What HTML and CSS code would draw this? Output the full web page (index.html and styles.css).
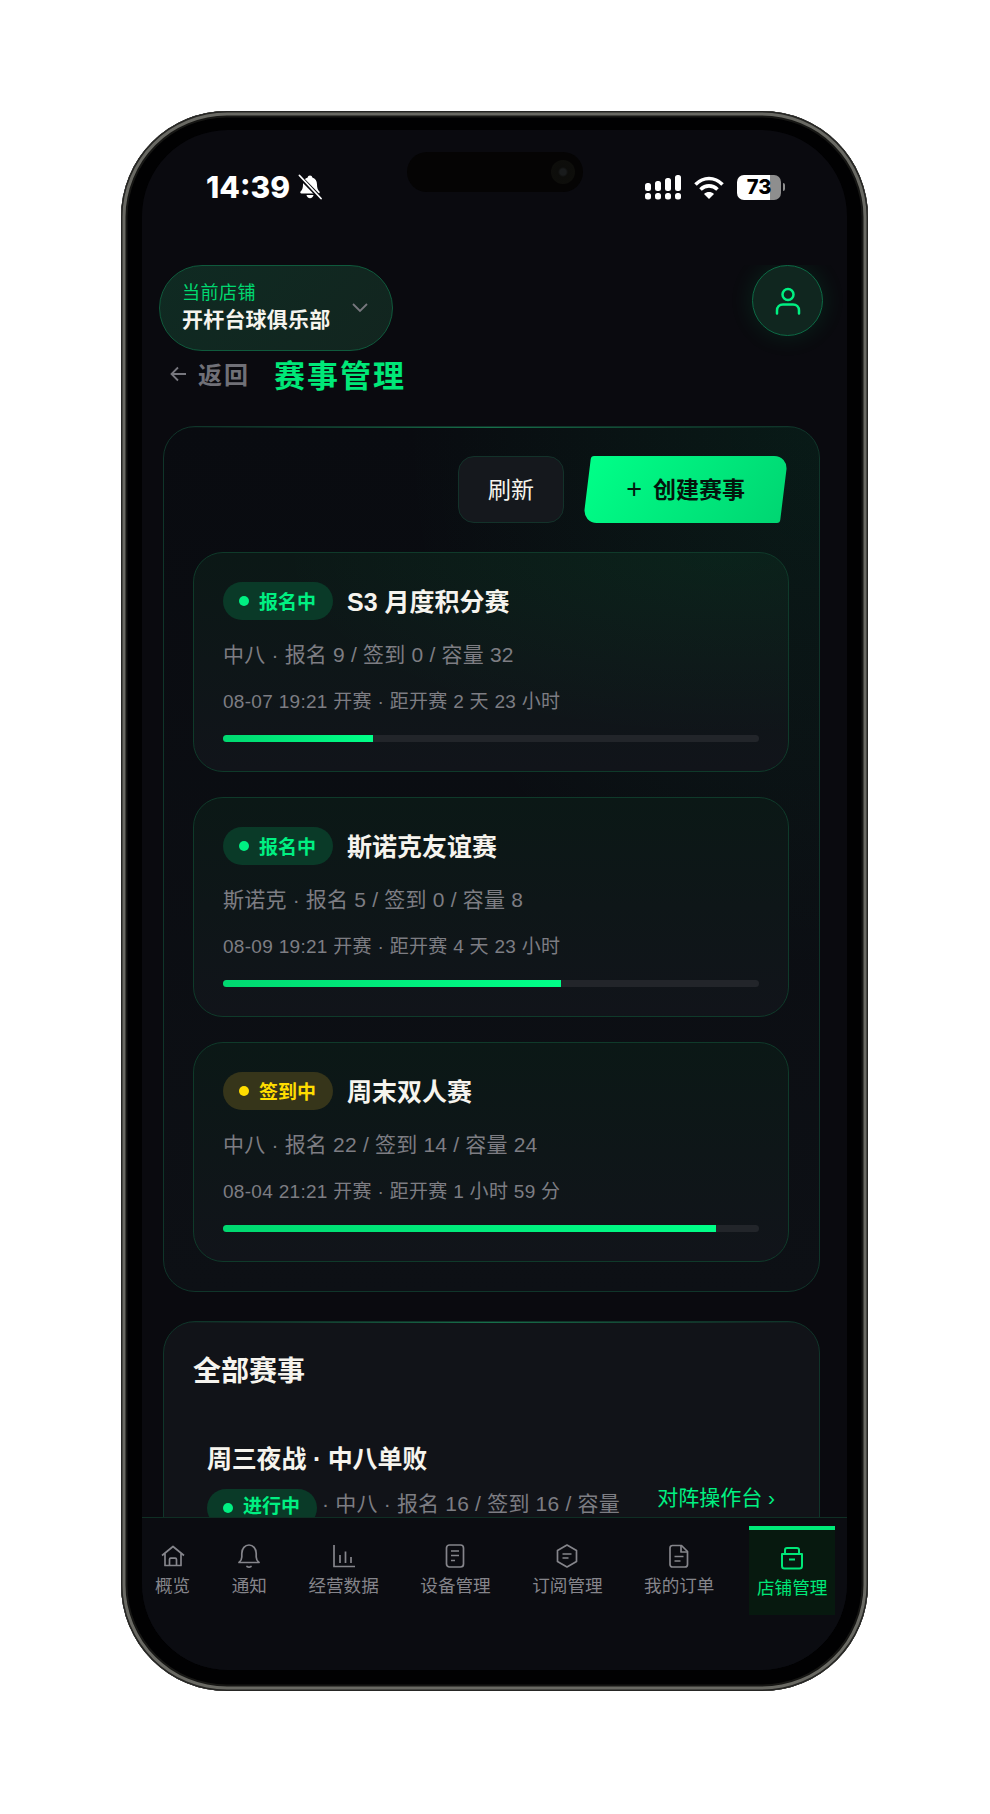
FILE: index.html
```html
<!DOCTYPE html>
<html lang="zh-CN">

<head>
    <meta charset="UTF-8">
    <meta name="viewport" content="width=device-width, initial-scale=1.0">
    <title>赛事管理</title>
    <link rel="stylesheet" href="styles.css">
</head>

<body>
    <div class="phone">
        <div class="screen">
            <div class="status-bar">
                <div class="status-left">
                    <span class="time">14:39</span>
                    <svg class="bell-off" width="24" height="26" viewBox="0 0 24 26">
                        <path d="M12 1.5c-1.3 0-2.2.9-2.3 2C6.600 4.500 5 7 5 10.500c0 3.500-.8 5.500-2.400 7-.7.7-.3 1.900.8 1.900h17.200c1.100 0 1.500-1.200.8-1.900-1.600-1.500-2.400-3.500-2.400-7 0-3.500-1.600-6-4.700-7-.1-1.100-1-2-2.300-2z" fill="#fff"/>
                        <path d="M8.500 21h7c-.3 2-1.700 3.200-3.500 3.200S8.800 23 8.500 21z" fill="#fff"/>
                        <path d="M1.500 2.500 22.500 24" stroke="#0a0a0f" stroke-width="4"/>
                        <path d="M1.500 1.500 23 24.500" stroke="#fff" stroke-width="1.800" stroke-linecap="round"/>
                    </svg>
                </div>
                <div class="island"><span class="camera"></span></div>
                <div class="status-right">
                    <svg width="36" height="25" viewBox="0 0 36 25" fill="#fff">
                        <rect x="0" y="8" width="6" height="8" rx="2.500"/>
                        <rect x="0" y="18" width="6" height="6.500" rx="2.500"/>
                        <rect x="10" y="6" width="6" height="10" rx="2.500"/>
                        <rect x="10" y="18" width="6" height="6.500" rx="2.500"/>
                        <rect x="20" y="3" width="6" height="13" rx="2.500"/>
                        <rect x="20" y="18" width="6" height="6.500" rx="2.500"/>
                        <rect x="30" y="0" width="6" height="16" rx="2.500"/>
                        <rect x="30" y="18" width="6" height="6.500" rx="2.500"/>
                    </svg>
                    <svg width="30" height="25" viewBox="0 0 30 25" fill="none" stroke="#fff" stroke-width="3.600">
                        <path d="M1.500 9.500C9.500 1.500 20.500 1.500 28.500 9.500"/>
                        <path d="M6.500 14.500c5-4.800 12-4.800 17 0"/>
                        <path d="M15 24l-5-5c3-2.600 7-2.600 10 0z" fill="#fff" stroke="none"/>
                    </svg>
                    <div class="battery-wrap">
                        <div class="battery">73</div>
                        <span class="battery-nub"></span>
                    </div>
                </div>
            </div>

            <main class="content">
                <div class="top-row">
                    <div class="store-pill">
                        <div class="store-text">
                            <div class="store-label">当前店铺</div>
                            <div class="store-name">开杆台球俱乐部</div>
                        </div>
                        <svg width="16" height="10" viewBox="0 0 16 10" fill="none" stroke="#77777e" stroke-width="1.800">
                            <path d="M1 1l7 7 7-7"/>
                        </svg>
                    </div>
                    <div class="avatar">
                        <svg width="26" height="28" viewBox="0 0 26 28" fill="none" stroke="#00f082" stroke-width="2.500">
                            <circle cx="13" cy="7.500" r="5.500"/>
                            <path d="M2 26.500v-3c0-3.500 2.500-6 6-6h10c3.500 0 6 2.500 6 6v3" stroke-linecap="round"/>
                        </svg>
                    </div>
                </div>

                <div class="title-row">
                    <div class="back">
                        <svg width="16" height="16" viewBox="0 0 16 16" fill="none" stroke="#77777e" stroke-width="1.800">
                            <path d="M8 1.500 1.500 8 8 14.500M2 8h14"/>
                        </svg>
                        <span>返回</span>
                    </div>
                    <h1 class="page-title">赛事管理</h1>
                </div>

                <section class="panel">
                    <div class="toolbar">
                        <button class="btn-refresh">刷新</button>
                        <button class="btn-create"><span class="btn-create-text"><b class="plus">+</b>创建赛事</span></button>
                    </div>

                    <div class="match-list">
                        <div class="match-card">
                            <div class="match-head">
                                <span class="chip"><i class="dot"></i>报名中</span>
                                <span class="match-name">S3 月度积分赛</span>
                            </div>
                            <div class="match-meta">中八 · 报名 9 / 签到 0 / 容量 32</div>
                            <div class="match-time">08-07 19:21 开赛 · 距开赛 2 天 23 小时</div>
                            <div class="progress"><div class="progress-fill" style="width: 28%"></div></div>
                        </div>

                        <div class="match-card">
                            <div class="match-head">
                                <span class="chip"><i class="dot"></i>报名中</span>
                                <span class="match-name">斯诺克友谊赛</span>
                            </div>
                            <div class="match-meta">斯诺克 · 报名 5 / 签到 0 / 容量 8</div>
                            <div class="match-time">08-09 19:21 开赛 · 距开赛 4 天 23 小时</div>
                            <div class="progress"><div class="progress-fill" style="width: 63%"></div></div>
                        </div>

                        <div class="match-card">
                            <div class="match-head">
                                <span class="chip chip-yellow"><i class="dot"></i>签到中</span>
                                <span class="match-name">周末双人赛</span>
                            </div>
                            <div class="match-meta">中八 · 报名 22 / 签到 14 / 容量 24</div>
                            <div class="match-time">08-04 21:21 开赛 · 距开赛 1 小时 59 分</div>
                            <div class="progress"><div class="progress-fill" style="width: 92%"></div></div>
                        </div>
                    </div>
                </section>

                <section class="panel panel-all">
                    <h2 class="panel-title">全部赛事</h2>
                    <div class="all-row">
                        <div class="all-info">
                            <div class="all-name">周三夜战 · 中八单败</div>
                            <div class="all-meta">
                                <span class="chip"><i class="dot"></i>进行中</span>
                                <span>· 中八 · 报名 16 / 签到 16 / 容量</span>
                            </div>
                        </div>
                        <a class="all-link">对阵操作台 ›</a>
                    </div>
                </section>
            </main>

            <nav class="tabbar">
                <div class="tab">
                    <svg width="26" height="26" viewBox="0 0 26 26" fill="none" stroke="currentColor" stroke-width="1.700" stroke-linejoin="round">
                        <path d="M2 12.500 13 3.500l11 9M5 10.500v12h16v-12"/>
                        <path d="M9.500 22.500v-6c0-.8.500-1.300 1.300-1.300h4.400c.8 0 1.300.500 1.300 1.300v6"/>
                    </svg>
                    <span>概览</span>
                </div>
                <div class="tab">
                    <svg width="26" height="26" viewBox="0 0 26 26" fill="none" stroke="currentColor" stroke-width="1.700" stroke-linecap="round">
                        <path d="M3 19.500c1.800-1.500 2.800-3 2.800-5.500v-3.500C5.800 5.500 9 2 13 2s7.200 3.500 7.200 8.500V14c0 2.500 1 4 2.800 5.500z" stroke-linejoin="round"/>
                        <path d="M11 23.500c1.200.8 2.800.8 4 0"/>
                    </svg>
                    <span>通知</span>
                </div>
                <div class="tab">
                    <svg width="26" height="26" viewBox="0 0 26 26" fill="none" stroke="currentColor" stroke-width="1.700">
                        <path d="M3 2v21.500h21M9 12v8M14.500 8.500V20M20 14v6"/>
                    </svg>
                    <span>经营数据</span>
                </div>
                <div class="tab">
                    <svg width="26" height="26" viewBox="0 0 26 26" fill="none" stroke="currentColor" stroke-width="1.700">
                        <rect x="4.500" y="2" width="17" height="22" rx="3"/>
                        <path d="M9 8h8M9 12.500h8M9 17.500h4"/>
                    </svg>
                    <span>设备管理</span>
                </div>
                <div class="tab">
                    <svg width="26" height="26" viewBox="0 0 26 26" fill="none" stroke="currentColor" stroke-width="1.700" stroke-linejoin="round">
                        <path d="M13 2 22.500 7.500v11L13 24 3.500 18.500v-11z"/>
                        <path d="M8.500 11h9M8.500 15h6"/>
                    </svg>
                    <span>订阅管理</span>
                </div>
                <div class="tab">
                    <svg width="26" height="26" viewBox="0 0 26 26" fill="none" stroke="currentColor" stroke-width="1.700" stroke-linejoin="round">
                        <path d="M6.500 2.500h9l6 6v13c0 1.500-1 2.500-2.500 2.500H6.500C5 24 4 23 4 21.500V5C4 3.500 5 2.500 6.500 2.500z"/>
                        <path d="M15 2.500V9h6.500M8.500 13.500h9M8.500 18h6"/>
                    </svg>
                    <span>我的订单</span>
                </div>
                <div class="tab tab-active">
                    <svg width="26" height="26" viewBox="0 0 26 26" fill="none" stroke="currentColor" stroke-width="2" stroke-linejoin="round">
                        <path d="M6 9V5c0-1.200.8-2 2-2h10c1.200 0 2 .8 2 2v4"/>
                        <path d="M3 9h20v12c0 1.500-1 2.500-2.500 2.500h-15C4 23.500 3 22.500 3 21z"/>
                        <path d="M10 14.500h6"/>
                    </svg>
                    <span>店铺管理</span>
                </div>
            </nav>
        </div>
    </div>
</body>

</html>
```

FILE: styles.css
```css
* {
    margin: 0;
    padding: 0;
    box-sizing: border-box;
}

body {
    background: #fff;
    height: 1814px;
    padding-top: 111px;
    overflow: hidden;
    font-family: "Liberation Sans", "Noto Sans CJK SC", sans-serif;
}

.phone {
    width: 747px;
    height: 1580px;
    margin-left: 121px;
    padding: 19px 21px 21px;
    background: #010102;
    border-radius: 106px;
    box-shadow: inset 0 0 0 1.5px #262624, inset 0 0 0 4.5px #696963, inset 0 0 0 6.5px #161614;
}

.screen {
    height: 100%;
    border-radius: 86px;
    background: #0a0a0f;
    overflow: hidden;
    display: flex;
    flex-direction: column;
    position: relative;
}

/* status bar */
.status-bar {
    height: 135px;
    flex-shrink: 0;
    padding: 42px 62px 0 64px;
    display: flex;
    justify-content: space-between;
    align-items: flex-start;
}

.status-left {
    display: flex;
    align-items: center;
    gap: 8px;
    height: 30px;
}

.time {
    font-family: Inter, "Liberation Sans", sans-serif;
    font-weight: 800;
    font-size: 30px;
    color: #fff;
}

.island {
    position: absolute;
    top: 22px;
    left: 265px;
    width: 176px;
    height: 40px;
    border-radius: 20px;
    background: #050404;
    display: flex;
    justify-content: flex-end;
    align-items: center;
    padding-right: 8px;
}

.camera {
    width: 24px;
    height: 24px;
    border-radius: 50%;
    background: radial-gradient(circle, #191b1c 0 3px, #0d0d0b 5px, #0e0e0b 12px);
}

.status-right {
    display: flex;
    align-items: center;
    gap: 13px;
    height: 30px;
}

.battery-wrap {
    display: flex;
    align-items: center;
    gap: 2px;
}

.battery {
    width: 44px;
    height: 25px;
    border-radius: 7px;
    background: linear-gradient(90deg, #fff 0 74%, #8e8e8e 74%);
    font-family: Inter, "Liberation Sans", sans-serif;
    font-weight: 800;
    font-size: 20px;
    line-height: 25px;
    color: #000;
    text-align: center;
}

.battery-nub {
    width: 2px;
    height: 8px;
    border-radius: 0 2px 2px 0;
    background: #8e8e8e;
}

/* content */
.content {
    flex: 1;
    min-height: 0;
    overflow: hidden;
    padding: 0 24px 0 17px;
}

.top-row {
    display: flex;
    justify-content: space-between;
    align-items: flex-start;
}

.store-pill {
    width: 234px;
    height: 86px;
    padding: 0 24px 0 22px;
    border-radius: 43px;
    border: 1.500px solid #0f5a3c;
    background: linear-gradient(135deg, #0f2a22, #12251f);
    display: flex;
    justify-content: space-between;
    align-items: center;
}

.store-label {
    font-size: 18px;
    line-height: 24px;
    letter-spacing: 0.5px;
    color: #00d870;
}

.store-name {
    font-size: 21px;
    line-height: 30px;
    font-weight: 700;
    letter-spacing: 0.2px;
    color: #f6f4ee;
}

.avatar {
    width: 71px;
    height: 71px;
    border-radius: 50%;
    border: 1.500px solid #0d6a45;
    background: #10261f;
    box-shadow: 0 0 24px rgba(0, 230, 118, 0.12);
    display: flex;
    justify-content: center;
    align-items: center;
}

.title-row {
    height: 43px;
    margin-top: 1px;
    padding-left: 11px;
    display: flex;
    align-items: center;
    gap: 24px;
}

.back {
    display: flex;
    align-items: center;
    gap: 12px;
    font-size: 24px;
    font-weight: 700;
    letter-spacing: 2px;
    color: #707077;
}

.page-title {
    font-size: 31px;
    font-weight: 700;
    letter-spacing: 2px;
    color: #00e878;
}

.panel {
    margin: 31px 3px 0 4px;
    padding: 29px 30px 29px 29px;
    border: 1px solid #10352a;
    border-radius: 32px;
    background:
        linear-gradient(90deg, rgba(23, 112, 74, 0), #17704a 50%, rgba(23, 112, 74, 0)) top / 100% 1px no-repeat,
        radial-gradient(ellipse at 100% 0%, rgba(0, 230, 118, 0.07) 0%, rgba(0, 230, 118, 0) 45%),
        linear-gradient(180deg, #090b10, #0d1015);
}

.panel-all {
    background:
        linear-gradient(90deg, rgba(23, 112, 74, 0), #17704a 50%, rgba(23, 112, 74, 0)) top / 100% 1px no-repeat,
        #111318;
    margin-top: 29px;
    height: 400px;
    padding-top: 30px;
}

.toolbar {
    display: flex;
    justify-content: flex-end;
    gap: 23px;
    padding-right: 5px;
    margin-bottom: 29px;
}

.btn-refresh {
    width: 106px;
    height: 67px;
    padding-bottom: 3px;
    border-radius: 16px;
    border: 1.500px solid #13322a;
    background: #15181d;
    color: #f6f4ee;
    font: inherit;
    font-size: 23px;
}

.btn-create {
    width: 197px;
    height: 67px;
    padding-bottom: 3px;
    border: none;
    border-radius: 3px 14px 3px 14px;
    background: linear-gradient(120deg, #00ff88, #00d672);
    transform: skewX(-7deg);
    font: inherit;
    font-size: 23px;
    font-weight: 700;
    color: #04140c;
}

.btn-create-text {
    display: inline-block;
    transform: skewX(7deg);
}

.plus {
    font-weight: 400;
    font-size: 27px;
    margin-right: 11px;
}

.match-list {
    display: flex;
    flex-direction: column;
    gap: 25px;
}

.match-card {
    height: 220px;
    padding: 29px 29px 0 29px;
    border: 1px solid #0f3a2a;
    border-radius: 30px;
    background: linear-gradient(180deg, #0b1816, #11141a);
}

.match-card:first-child {
    background:
        radial-gradient(ellipse at 90% 0%, rgba(0, 230, 118, 0.05) 0%, rgba(0, 230, 118, 0) 60%),
        linear-gradient(180deg, #0b1816, #11141a);
}

.match-head {
    display: flex;
    align-items: center;
    gap: 14px;
    height: 38px;
}

.chip {
    flex-shrink: 0;
    display: inline-flex;
    align-items: center;
    gap: 10px;
    width: 110px;
    height: 38px;
    padding: 0 0 2px 16px;
    border-radius: 19px;
    background: #0a3a28;
    font-size: 19px;
    font-weight: 700;
    color: #00f082;
}

.dot {
    width: 10px;
    height: 10px;
    margin-top: 2px;
    border-radius: 50%;
    background: currentColor;
}

.chip-yellow {
    background: #36351a;
    color: #ffdd00;
}

.match-name {
    padding-bottom: 2px;
    font-size: 25px;
    font-weight: 700;
    color: #f6f4ee;
}

.match-meta {
    margin-top: 20px;
    font-size: 21px;
    line-height: 30px;
    letter-spacing: 0.2px;
    color: #7d7d83;
}

.match-time {
    margin-top: 17px;
    font-size: 19px;
    line-height: 30px;
    letter-spacing: 0.3px;
    color: #7d7d83;
}

.progress {
    margin-top: 18px;
    height: 7px;
    border-radius: 4px;
    background: #22252a;
    overflow: hidden;
}

.progress-fill {
    height: 100%;
    background: linear-gradient(90deg, #00d870, #00ff88);
}

.panel-title {
    font-size: 28px;
    line-height: 40px;
    font-weight: 700;
    color: #f6f4ee;
}

.all-row {
    margin-top: 48px;
    padding: 0 14px 0 14px;
    display: flex;
    justify-content: space-between;
}

.all-info {
    width: 421px;
}

.all-name {
    font-size: 25px;
    line-height: 38px;
    font-weight: 700;
    letter-spacing: -0.2px;
    color: #f6f4ee;
}

.all-meta {
    margin-top: 7px;
    display: flex;
    gap: 5px;
    font-size: 21px;
    line-height: 38px;
    letter-spacing: 0.2px;
    color: #7d7d83;
}

.all-meta .chip {
    margin-top: 4px;
    letter-spacing: 0;
}

.all-link {
    margin-top: 43px;
    font-size: 21px;
    line-height: 30px;
    color: #00f082;
    white-space: nowrap;
}

/* bottom tabs */
.tabbar {
    height: 153px;
    flex-shrink: 0;
    padding: 8px 0 0 6px;
    border-top: 1px solid #0f2f24;
    background: #0b0c11;
    display: flex;
    gap: 27.5px;
    align-items: flex-start;
}

.tab {
    padding: 17px 7px 0;
    display: flex;
    flex-direction: column;
    align-items: center;
    gap: 5px;
    font-size: 17.6px;
    line-height: 24px;
    color: #85858b;
    white-space: nowrap;
}

.tab-active {
    height: 89px;
    padding: 15px 8px 0;
    border-top: 4px solid #00e878;
    background: #07190f;
    color: #00e878;
}
```
